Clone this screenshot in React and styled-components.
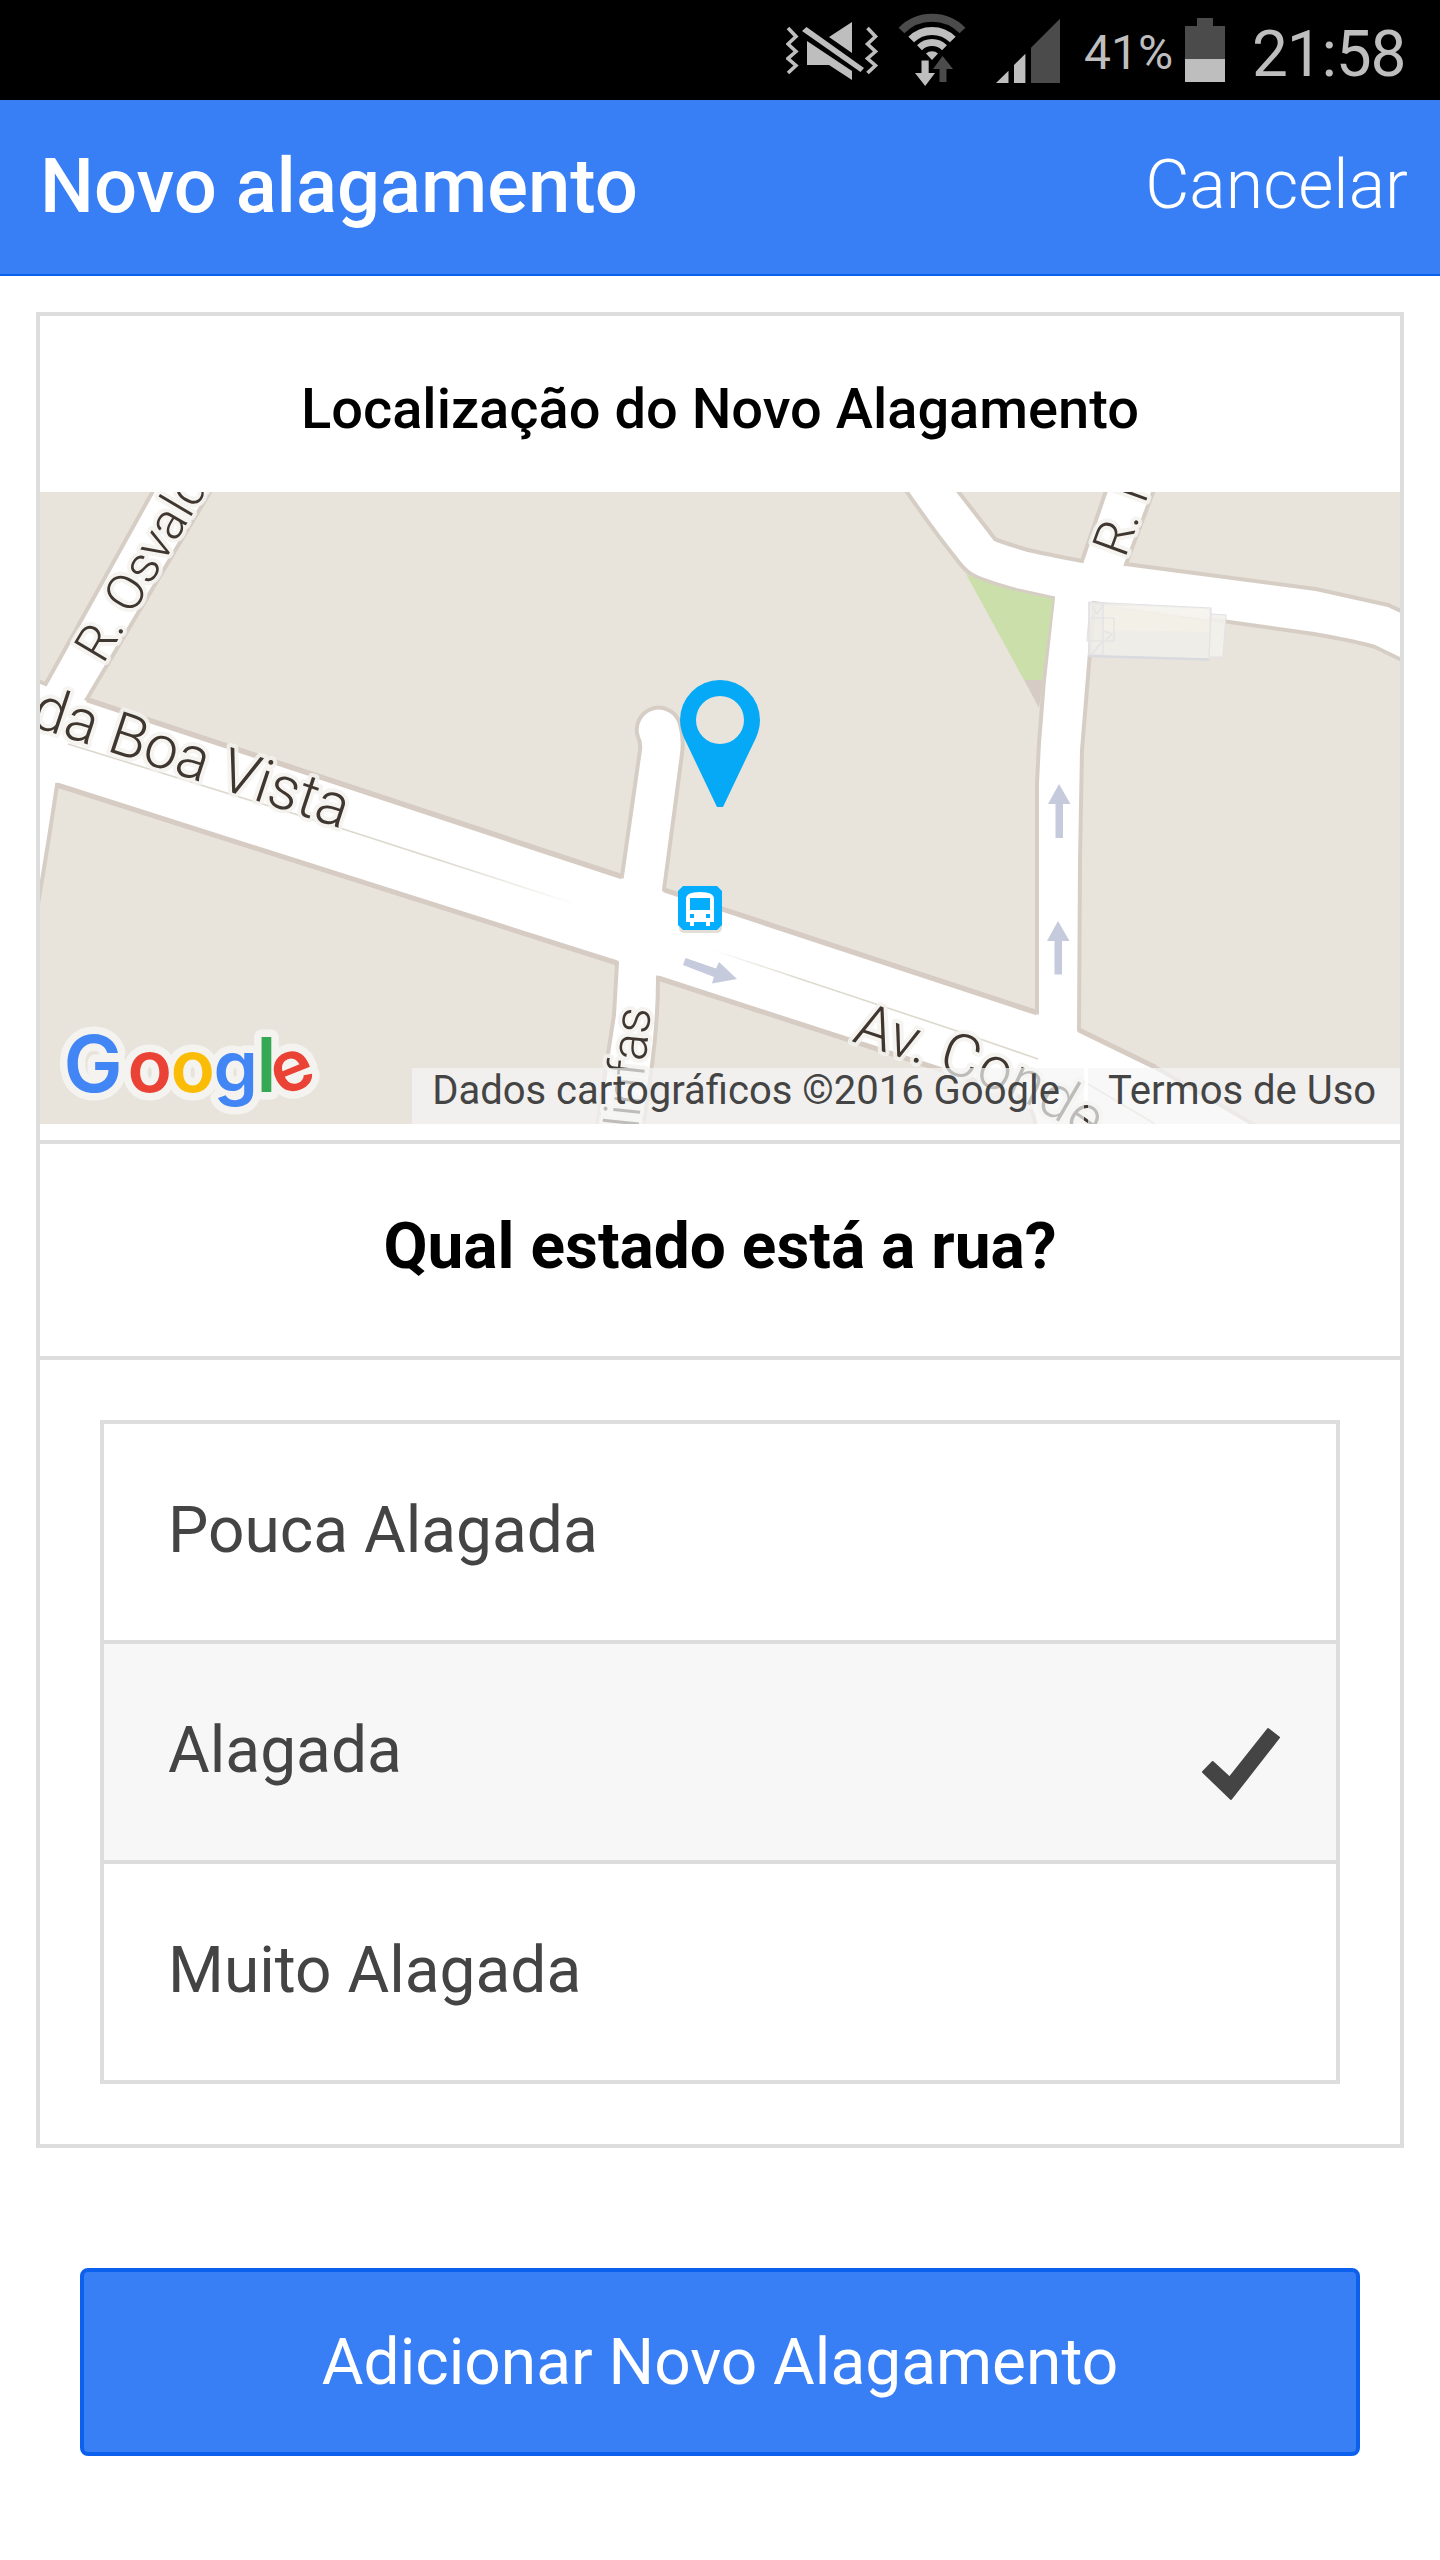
import React, { useState } from "react";
import styled, { createGlobalStyle } from "styled-components";

const GlobalStyle = createGlobalStyle`
  * { box-sizing: border-box; }
  body { margin: 0; background: #fff; font-family: Roboto, "Noto Sans", sans-serif; }
`;

const Screen = styled.div`
  display: flex;
  flex-direction: column;
  width: 1440px;
  height: 2560px;
  background: #fff;
`;

const StatusBar = styled.div`
  display: flex;
  align-items: center;
  justify-content: flex-end;
  height: 100px;
  flex: none;
  background: #000;
  color: #bebebe;
  padding-right: 32px;
`;

const StatusIcon = styled.svg`
  display: block;
  flex: none;
  height: 100px;
  width: ${(p) => p.$width}px;
  margin-right: ${(p) => p.$gap}px;
`;

const StatusText = styled.span`
  flex: none;
  width: ${(p) => p.$width}px;
  height: 100px;
  font-size: ${(p) => p.$size}px;
  line-height: ${(p) => p.$line}px;
  letter-spacing: ${(p) => p.$track || 0}px;
  white-space: nowrap;
`;

const Header = styled.header`
  display: flex;
  justify-content: space-between;
  align-items: center;
  flex: none;
  height: 176px;
  padding: 0 32px 2px 40px;
  background: #387ef5;
  border-bottom: 2px solid #0c60ee;
  color: #fff;
`;

const Title = styled.h1`
  margin: 0;
  font-size: 76px;
  line-height: 76px;
  font-weight: 500;
`;

const CancelButton = styled.button`
  border: 0;
  padding: 0 0 2px;
  background: none;
  color: #fff;
  font-family: inherit;
  font-size: 68px;
  line-height: 76px;
  font-weight: 300;
`;

const Content = styled.main`
  display: flex;
  flex-direction: column;
  padding: 36px 36px 0;
`;

const Card = styled.section`
  display: flex;
  flex-direction: column;
  border: 4px solid #ddd;
`;

const MapSection = styled.div`
  padding-bottom: 16px;
  border-bottom: 4px solid #ddd;
`;

const MapTitle = styled.h2`
  margin: 0;
  height: 176px;
  padding-top: 10px;
  font-size: 56px;
  line-height: 166px;
  font-weight: 500;
  text-align: center;
  color: #000;
`;

const MapView = styled.div`
  position: relative;
  height: 632px;
  overflow: hidden;
`;

const MapCanvas = styled.svg`
  display: block;
  width: 1360px;
  height: 632px;
`;

const Attribution = styled.div`
  position: absolute;
  right: 0;
  bottom: 0;
  display: flex;
  gap: 4px;
`;

const AttributionItem = styled.span`
  width: ${(p) => p.$width}px;
  height: 56px;
  padding-right: 4px;
  font-size: 40px;
  line-height: 46px;
  text-align: center;
  white-space: nowrap;
  color: #444;
  background: rgba(245, 245, 245, 0.7);
`;

const Question = styled.h2`
  margin: 0;
  height: 216px;
  border-bottom: 4px solid #ddd;
  font-size: 64px;
  line-height: 206px;
  font-weight: 700;
  text-align: center;
  color: #000;
`;

const Options = styled.div`
  display: flex;
  flex-direction: column;
  margin: 60px;
  border: 4px solid #ddd;
`;

const Option = styled.button`
  display: flex;
  justify-content: space-between;
  align-items: center;
  height: ${(p) => (p.$last ? 216 : 220)}px;
  padding: 0 56px 2px 64px;
  border: 0;
  border-bottom: ${(p) => (p.$last ? 0 : 4)}px solid #ddd;
  background: ${(p) => (p.$selected ? "#f7f7f7" : "#fff")};
  color: #444;
  font-family: inherit;
  font-size: 64px;
  line-height: 76px;
  text-align: left;
`;

const CheckMark = styled.svg`
  width: 80px;
  height: 76px;
  margin-top: 26px;
`;

const SubmitButton = styled.button`
  height: 188px;
  margin: 120px 44px 0;
  padding: 2px 0 0;
  border: 4px solid #0c60ee;
  border-radius: 8px;
  background: #387ef5;
  color: #fff;
  font-family: inherit;
  font-size: 64px;
  line-height: 178px;
`;

const LIGHT = "#bebebe";
const DARK = "#4b4b4b";

function MuteIcon() {
  return (
    <StatusIcon $width={94} $gap={16} viewBox="786 0 94 100">
      <g fill="none" stroke={LIGHT} strokeWidth="3.6">
        <path d="M788 28L796 36.5L788 44L796 51.5L788 58.5L796 65.5L788 73" />
        <path d="M867.500 28L875.500 36.500L867.500 44L875.500 51.500L867.500 58.500L875.500 65.500L867.500 73" />
      </g>
      <g fill={LIGHT}>
        <path d="M852 22V53L829 37Z" />
        <path d="M802 31L806.500 27L864 68L860.500 72Z" />
        <path d="M807 41L852 71V80L829 65H807Z" />
      </g>
    </StatusIcon>
  );
}

function WifiIcon() {
  return (
    <StatusIcon $width={72} $gap={26} viewBox="896 0 72 100">
      <g fill="none" strokeWidth="8">
        <path d="M901.500 30.500A43 43 0 0 1 962.500 30.500" stroke={DARK} />
        <path d="M911.200 39.500A29.400 29.400 0 0 1 952.800 39.500" stroke={LIGHT} />
        <path d="M919.500 47.700A17.800 17.800 0 0 1 944.500 47.700" stroke={LIGHT} strokeWidth="7" />
      </g>
      <path d="M932 60L926 53.500A9 9 0 0 1 938 53.500Z" fill={LIGHT} />
      <path d="M921.500 60.500H928.700V73H935L925.200 86L915 73H921.500Z" fill={LIGHT} />
      <path d="M942.600 56L953 69H946.500V82H939.500V69H933Z" fill={DARK} />
    </StatusIcon>
  );
}

function SignalIcon() {
  return (
    <StatusIcon $width={68} $gap={22} viewBox="994 0 68 100">
      <path d="M996 83L1008.500 70.700V83ZM1014 83V65L1025.400 53.700V83Z" fill={LIGHT} />
      <path d="M1031 83V47.700L1060 18.700V83Z" fill={DARK} />
    </StatusIcon>
  );
}

function BatteryIcon() {
  return (
    <StatusIcon $width={40} $gap={27} viewBox="1185 0 40 100">
      <path d="M1197 18H1213V26H1225V59H1185V26H1197Z" fill={DARK} />
      <path d="M1185 59H1225V82H1185Z" fill={LIGHT} />
    </StatusIcon>
  );
}

function StreetLabels() {
  return (
    <g
      fill="#3f372f"
      stroke="#f3f2ee"
      strokeOpacity="0.85"
      strokeWidth="8"
      strokeLinejoin="round"
      paintOrder="stroke"
      fontFamily="Roboto, sans-serif"
      fontWeight="300"
    >
      <text transform="translate(103 665) rotate(-59.3)" fontSize="51">R. Osvaldo</text>
      <text transform="translate(342 829) rotate(18.400)" fontSize="60" textAnchor="end">da Boa Vista</text>
      <text transform="translate(1125 559) rotate(-70)" fontSize="51">R. I</text>
      <text transform="translate(651 1009) rotate(-84)" fontSize="51" textAnchor="end">Ninfas</text>
      <text fontSize="59.500">
        <textPath href="#conde">Av. Conde da</textPath>
      </text>
    </g>
  );
}

function GoogleLogo() {
  const letters = [
    { ch: "G", x: 63.5, color: "#4285f4", size: 79, weight: 600 },
    { ch: "o", x: 127.5, color: "#ea4335", size: 73, weight: 600 },
    { ch: "o", x: 170.5, color: "#fbbc05", size: 73, weight: 600 },
    { ch: "g", x: 213.5, color: "#4285f4", size: 71, weight: 600 },
    { ch: "l", x: 256.5, color: "#34a853", size: 76, weight: 600 },
  ];
  const layer = (halo) => (
    <g
      fontFamily="Inter, Roboto, sans-serif"
      strokeLinejoin="round"
      stroke={halo ? "#f4f3f0" : "none"}
      strokeWidth="15"
      aria-hidden={halo}
    >
      {letters.map((l) => (
        <text
          key={l.x}
          x={l.x}
          y="1092"
          fontSize={l.size}
          fontWeight={l.weight}
          fill={halo ? "#f4f3f0" : l.color}
        >
          {l.ch}
        </text>
      ))}
      <text
        transform="translate(280 1097) rotate(-22)"
        fontSize="71"
        fontWeight="600"
        fill={halo ? "#f4f3f0" : "#ea4335"}
      >
        e
      </text>
    </g>
  );
  return <g>{layer(true)}{layer(false)}</g>;
}

const BLOCKS = [
  "M30 482H158L45.700 684L30 678Z",
  "M216 482L87 699L622 876L640 750Q641 743 638 737A22 22 0 1 1 680 724Q684 738 682 754L664 889.500L1037 1012V783L1039 743L1044 680L1053 598L1016 590Q980 580 971 574Q964 570 954 556Q933 530 900 482Z",
  "M951 482L995 539Q998 541 1028 550Q1046 554 1082 561L1109 482Z",
  "M1157 482L1126 564L1316 589L1388 605L1410 615V482Z",
  "M1410 664L1375 647Q1355 641 1314 634L1094 603L1082 750L1080 860L1079 1030L1155 1067L1270 1134H1410Z",
  "M57 785L617 963L614 1015L608 1054L596 1134H30V950Q46 860 57 785Z",
  "M658 978L1010 1092Q1036 1102 1036 1134H642L652 1065Q658 1020 658 978Z",
];

function StreetMap() {
  return (
    <MapCanvas viewBox="40 492 1360 632">
      <defs>
        <path id="conde" d="M851 1041L966 1079Q1030 1102 1062 1124L1140 1178" />
        <linearGradient id="fadeOut" gradientUnits="userSpaceOnUse" x1="440" y1="0" x2="580" y2="0">
          <stop offset="0" stopColor="#dcd8cd" />
          <stop offset="1" stopColor="#fff" />
        </linearGradient>
        <linearGradient id="fadeIn" gradientUnits="userSpaceOnUse" x1="712" y1="0" x2="800" y2="0">
          <stop offset="0" stopColor="#fff" />
          <stop offset="1" stopColor="#dcd8cd" />
        </linearGradient>
      </defs>
      <rect x="40" y="492" width="1360" height="632" fill="#fff" />
      {BLOCKS.map((d) => (
        <path key={d} d={d} fill="#e8e4dc" stroke="#d6cec5" strokeWidth="4" />
      ))}
      <path d="M966 574Q990 585 1016 591L1053 599L1042 680H1024Z" fill="#cadfaa" />
      <path d="M1024 680H1043L1039 708Z" fill="#d6ccc5" />
      <path d="M87 700L622 877M57 785L617 963M664 890L1037 1013M658 978L1010 1092M1079 1030L1155 1067" fill="none" stroke="#d6ccc4" strokeWidth="5" />
      <g fill="none" strokeWidth="1.600">
        <path d="M68 744L340 828L572 903" stroke="url(#fadeOut)" />
        <path d="M713 950L960 1032L1038 1059" stroke="url(#fadeIn)" />
        <path d="M1088 1084L1155 1124" stroke="#dcd8cd" />
      </g>
      <g stroke="#e2e2e5" strokeWidth="1.200" fill="#efede8" fillOpacity="0.9">
        <path d="M1089 602L1211 608V659L1089 656Z" />
        <path d="M1211 614L1226 615L1223 657H1209Z" fill="#f3f1eb" />
        <path d="M1104 605L1209 609V620L1160 613Z" fill="#f6f4ee" stroke="none" />
        <path d="M1104 605L1160 613L1209 621V632L1104 630Z" fill="#f3f0e8" stroke="none" />
        <path d="M1089 603H1103V655H1089ZM1089 618H1114V641H1087Z" fill="none" />
        <path d="M1092 606L1097 614L1102 606M1092 654L1102 642M1104 631L1112 634L1106 640" fill="none" />
      </g>
      <path d="M1089 656L1209 659.500" stroke="#d8dadf" strokeWidth="2.500" />
      <g fill="#c6cadd">
        <path d="M1059 784L1070.500 804H1063V838H1055.500V804H1048Z" />
        <path d="M1058 921L1069.500 941H1062V974.500H1054.500V941H1047Z" />
        <path d="M685.500 958L716 968.500L719 962L737 979L712 983.500L714 977L683 965Z" />
      </g>
      <StreetLabels />
      <path d="M720 680A40 40 0 0 1 760 720Q760 731 753 744L723 807H717L687 744Q680 731 680 720A40 40 0 0 1 720 680ZM720 696A24 24 0 1 0 720 744A24 24 0 1 0 720 696Z" fill="#05a9f6" fillRule="evenodd" />
      <rect x="679" y="890" width="43" height="43" rx="5" fill="#e4dfd6" />
      <path d="M683 886H717L722 891V925L717 930H683L678 925V891Z" fill="#05adff" />
      <path d="M686 922V899Q686 892 700 892Q714 892 714 899V922H710V926H706V922H694V926H690V922Z" fill="#fff" />
      <path d="M690 898H710V910H690ZM690 914H694V918H690ZM706 914H710V918H706Z" fill="#05adff" />
      <GoogleLogo />
    </MapCanvas>
  );
}

const LEVELS = ["Pouca Alagada", "Alagada", "Muito Alagada"];

export default function App() {
  const [selected, setSelected] = useState("Alagada");
  return (
    <Screen>
      <GlobalStyle />
      <StatusBar>
        <MuteIcon />
        <WifiIcon />
        <SignalIcon />
        <StatusText $width={101} $size={48} $line={105}>41%</StatusText>
        <BatteryIcon />
        <StatusText $width={156} $size={64} $line={109} $track={-1.2}>21:58</StatusText>
      </StatusBar>
      <Header>
        <Title>Novo alagamento</Title>
        <CancelButton>Cancelar</CancelButton>
      </Header>
      <Content>
        <Card>
          <MapSection>
            <MapTitle>Localização do Novo Alagamento</MapTitle>
            <MapView>
              <StreetMap />
              <Attribution>
                <AttributionItem $width={672}>Dados cartográficos ©2016 Google</AttributionItem>
                <AttributionItem $width={312}>Termos de Uso</AttributionItem>
              </Attribution>
            </MapView>
          </MapSection>
          <Question>Qual estado está a rua?</Question>
          <Options>
            {LEVELS.map((level, i) => (
              <Option
                key={level}
                $selected={level === selected}
                $last={i === LEVELS.length - 1}
                onClick={() => setSelected(level)}
              >
                {level}
                {level === selected && (
                  <CheckMark viewBox="1200 1726 80 76">
                    <path
                      d="M1203 1772L1212.700 1762L1229.500 1777.500L1268 1729L1279 1737.500L1231 1799Z"
                      fill="#444"
                      stroke="#444"
                      strokeWidth="2"
                      strokeLinejoin="round"
                    />
                  </CheckMark>
                )}
              </Option>
            ))}
          </Options>
        </Card>
        <SubmitButton>Adicionar Novo Alagamento</SubmitButton>
      </Content>
    </Screen>
  );
}
